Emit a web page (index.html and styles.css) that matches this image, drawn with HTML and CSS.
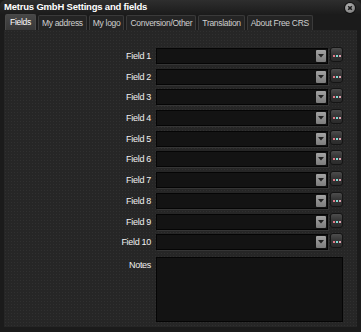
FILE: index.html
```html
<!DOCTYPE html>
<html lang="en">
<head>
  <meta charset="UTF-8">
  <title>Metrus GmbH Settings and fields</title>
  <link rel="stylesheet" href="styles.css">
</head>
<body>
  <div class="window">
    <div class="titlebar">
      <span class="title">Metrus GmbH Settings and fields</span>
      <span class="close">
        <svg width="10" height="10" viewBox="0 0 10 10"><path d="M3.2 3.2 L6.8 6.8 M6.8 3.2 L3.2 6.8" stroke="#1a1a1a" stroke-width="1.6"/></svg>
      </span>
    </div>

    <div class="tabs">
      <div class="tab active">Fields</div>
      <div class="tab">My address</div>
      <div class="tab">My logo</div>
      <div class="tab">Conversion/Other</div>
      <div class="tab">Translation</div>
      <div class="tab">About Free CRS</div>
    </div>

    <div class="panel">
      <div class="form" id="form"></div>
    </div>
  </div>

  <script>
    const form = document.getElementById('form');
    const chevron = '<svg width="6" height="4" viewBox="0 0 6 4"><path d="M0 0 H6 L3 3.5 Z" fill="#222"/></svg>';

    for (let i = 1; i <= 10; i++) {
      const label = document.createElement('label');
      label.className = 'label';
      label.innerText = `Field ${i}`;
      form.appendChild(label);

      const ctl = document.createElement('div');
      ctl.className = 'control';
      ctl.innerHTML = `
        <div class="combo"><span class="drop">${chevron}</span></div>
        <div class="dots"><i class="d1"></i><i class="d2"></i><i class="d3"></i></div>`;
      form.appendChild(ctl);
    }

    const notesLabel = document.createElement('label');
    notesLabel.className = 'label notes-label';
    notesLabel.innerText = 'Notes';
    form.appendChild(notesLabel);

    const notes = document.createElement('div');
    notes.className = 'notes';
    form.appendChild(notes);
  </script>
</body>
</html>
```

FILE: styles.css
```css
body {
  margin: 0;
  background: #1a1a1a;
  font-family: "Liberation Sans", Arial, sans-serif;
}
.window {
  width: 361px;
  height: 332px;
  background: #1b1b1b;
  display: flex;
  flex-direction: column;
  overflow: hidden;
}
.titlebar {
  height: 14px;
  display: flex;
  align-items: center;
  justify-content: space-between;
  padding: 0 6px 0 4px;
  background: linear-gradient(#2e2e2e, #1c1c1c);
  border-radius: 6px 6px 0 0;
}
.title {
  color: #fff;
  font-size: 9.5px;
  font-weight: bold;
  letter-spacing: -0.2px;
  line-height: 14px;
}
.close {
  width: 10px;
  height: 10px;
  margin-top: 2px;
  border-radius: 50%;
  background: radial-gradient(circle at 40% 35%, #b5b5b5, #6e6e6e);
  box-shadow: 0 0 0 1px #111;
  display: flex;
}
.tabs {
  height: 16px;
  display: flex;
  align-items: flex-end;
  gap: 2px;
  padding-left: 5px;
  background: #1b1b1b;
}
.tab {
  height: 14px;
  padding: 0 3px;
  font-size: 8.5px;
  letter-spacing: -0.3px;
  line-height: 14px;
  color: #cfcfcf;
  background: #242424;
  border: 1px solid #3a3a3a;
  border-bottom: none;
  border-radius: 2px 2px 0 0;
}
.tab.active {
  height: 15px;
  line-height: 15px;
  padding: 0 4px;
  color: #fff;
  background: linear-gradient(#474747, #383838);
  border-color: #4a4a4a;
}
.panel {
  flex: 1;
  margin: 0 4px 5px 4px;
  padding-top: 18px;
  background-color: #262626;
  background-image: radial-gradient(circle, #303030 0.9px, transparent 1px);
  background-size: 3px 3px;
}
.form {
  display: grid;
  grid-template-columns: 147px 187px;
  column-gap: 5px;
  row-gap: 4.7px;
}
.label {
  font-size: 9px;
  letter-spacing: -0.3px;
  color: #f0f0f0;
  text-align: right;
  line-height: 16px;
}
.control {
  display: flex;
  gap: 2px;
  height: 16px;
}
.combo {
  flex: 1;
  background: #131313;
  border: 1px solid #050505;
  box-shadow: 1px 1px 0 #353535;
  display: flex;
  justify-content: flex-end;
  align-items: center;
  padding-right: 1px;
}
.drop {
  width: 10px;
  height: 12px;
  background: linear-gradient(#a3a3a3, #7c7c7c);
  border-radius: 1px;
  display: flex;
  align-items: center;
  justify-content: center;
}
.dots {
  width: 13px;
  height: 15px;
  margin-top: -1px;
  box-sizing: border-box;
  border: 1px solid #151515;
  border-radius: 3px;
  background: linear-gradient(#4d4d4d, #363636 45%, #2b2b2b);
  display: flex;
  justify-content: center;
  align-items: flex-end;
  gap: 1px;
  padding-bottom: 4px;
}
.dots i {
  width: 2px;
  height: 2px;
}
.d1 { background: #e07b8a; }
.d2 { background: #7fdcd2; }
.d3 { background: #e0a0b0; }
.notes-label {
  margin-top: 4px;
  line-height: 12px;
}
.notes {
  margin-top: 2px;
  height: 65px;
  background: #131313;
  border: 1px solid #050505;
  box-sizing: border-box;
}
```
